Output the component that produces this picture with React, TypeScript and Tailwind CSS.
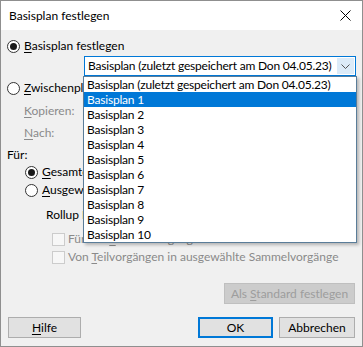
import React from "react";

const items = [
  "Basisplan (zuletzt gespeichert am Don 04.05.23)",
  "Basisplan 1",
  "Basisplan 2",
  "Basisplan 3",
  "Basisplan 4",
  "Basisplan 5",
  "Basisplan 6",
  "Basisplan 7",
  "Basisplan 8",
  "Basisplan 9",
  "Basisplan 10",
];

function Radio({ checked }: { checked?: boolean }) {
  return (
    <span className="w-[13px] h-[13px] rounded-full border border-[#333333] bg-white flex items-center justify-center shrink-0">
      {checked && <span className="w-[7px] h-[7px] rounded-full bg-[#1a1a1a]" />}
    </span>
  );
}

function Check() {
  return <span className="w-[13px] h-[13px] border border-[#cccccc] bg-[#f7f7f7] shrink-0" />;
}

function Key({ c }: { c: string }) {
  return <span className="underline underline-offset-2">{c}</span>;
}

export default function App() {
  return (
    <div
      className="relative w-[363px] h-[347px] border border-[#8f8f8f] bg-[#f0f0f0] flex flex-col text-[12px] text-black leading-none whitespace-nowrap"
      style={{ fontFamily: "Lato, sans-serif" }}
    >
      <div className="h-[29px] bg-white flex items-center justify-between pl-[8px] pr-[10px] shrink-0">
        <span>Basisplan festlegen</span>
        <svg width="11" height="11" viewBox="0 0 11 11" className="mr-[1px]">
          <path d="M0.5 0.5 L10.5 10.5 M10.5 0.5 L0.5 10.5" stroke="#000" strokeWidth="1" />
        </svg>
      </div>

      <div className="flex flex-col">
        <label className="mt-[8px] h-[16px] flex items-center gap-[4px] pl-[6px]">
          <Radio checked />
          <span>
            <Key c="B" />asisplan festlegen
          </span>
        </label>

        <div className="mt-[2px] ml-[83px] mr-[6px] h-[20px] border border-[#0078d7] bg-white flex items-center">
          <span className="flex-1 pl-[3px] tracking-[-0.2px]">Basisplan (zuletzt gespeichert am Don 04.05.23)</span>
          <span className="w-[17px] h-[16px] mr-[1px] bg-[#dcebf8] flex items-center justify-center">
            <svg width="9" height="5" viewBox="0 0 9 5">
              <path d="M0.5 0.5 L4.5 4.5 L8.5 0.5" stroke="#555" fill="none" strokeWidth="1" />
            </svg>
          </span>
        </div>

        <label className="mt-[4px] h-[16px] flex items-center gap-[4px] pl-[6px]">
          <Radio />
          <span>
            <Key c="Z" />wischenplan speichern
          </span>
        </label>

        <div className="mt-[5px] h-[20px] flex items-center pl-[23px] text-[#8a8a8a]">
          <span className="w-[66px]">
            <Key c="K" />opieren:
          </span>
          <span className="flex-1 mr-[8px] h-[20px] border border-[#cccccc] bg-[#f0f0f0]" />
        </div>

        <div className="mt-[2px] h-[20px] flex items-center pl-[23px] text-[#8a8a8a]">
          <span className="w-[66px]">
            <Key c="N" />ach:
          </span>
          <span className="flex-1 mr-[8px] h-[20px] border border-[#cccccc] bg-[#f0f0f0]" />
        </div>

        <div className="mt-[4px] h-[16px] flex items-center pl-[6px]">Für:</div>

        <label className="mt-[1px] h-[16px] flex items-center gap-[4px] pl-[24px]">
          <Radio checked />
          <span>
            <Key c="G" />esamtes Projekt
          </span>
        </label>

        <label className="mt-[2px] h-[16px] flex items-center gap-[4px] pl-[24px]">
          <Radio />
          <span>
            <Key c="A" />usgewählte Vorgänge
          </span>
        </label>

        <div className="mt-[9px] h-[16px] flex items-center pl-[45px]">Rollup Basisplan:</div>

        <label className="mt-[8px] h-[16px] flex items-center gap-[3px] pl-[51px] text-[#8a8a8a]">
          <Check />
          <span>
            Für alle <Key c="S" />ammelvorgänge
          </span>
        </label>

        <label className="mt-[2px] h-[16px] flex items-center gap-[3px] pl-[51px] text-[#8a8a8a]">
          <Check />
          <span>
            Von <Key c="T" />eilvorgängen in ausgewählte Sammelvorgänge
          </span>
        </label>

        <div className="mt-[18px] flex justify-end pr-[7px]">
          <button className="w-[131px] h-[21px] bg-[#cccccc] border border-[#bfbfbf] text-[#9d9d9d]">
            Als <Key c="S" />tandard festlegen
          </button>
        </div>

        <div className="mt-[13px] flex items-center pl-[7px] pr-[7px]">
          <button className="w-[73px] h-[21px] bg-[#e1e1e1] border border-[#adadad]">
            <Key c="H" />ilfe
          </button>
          <button className="ml-auto w-[75px] h-[21px] bg-[#e1e1e1] border-2 border-[#0078d7]">OK</button>
          <button className="ml-[6px] w-[76px] h-[21px] bg-[#e1e1e1] border border-[#adadad]">Abbrechen</button>
        </div>
      </div>

      <ul className="absolute left-[82px] top-[75px] w-[274px] border border-[#5a7d99] bg-white shadow-[2px_2px_3px_rgba(0,0,0,0.25)] tracking-[-0.2px]">
        {items.map((t, i) => (
          <li
            key={t}
            className={`h-[15px] flex items-center pl-[3px] ${i === 1 ? "bg-[#0078d7] text-white" : ""}`}
          >
            {t}
          </li>
        ))}
      </ul>
    </div>
  );
}
